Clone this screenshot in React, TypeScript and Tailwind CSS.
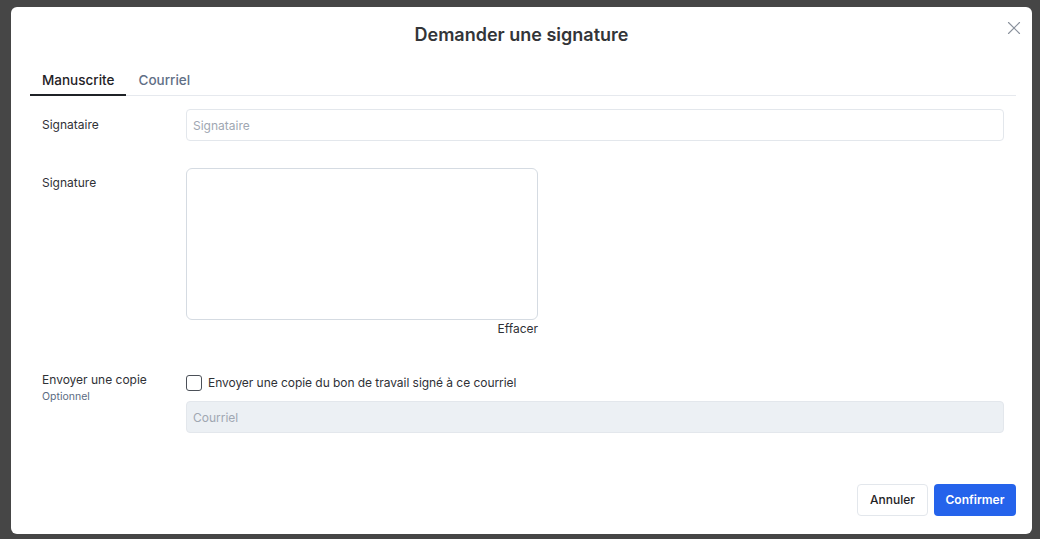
import { X } from "lucide-react";

const Label = ({ children, sub }: { children: React.ReactNode; sub?: string }) => (
    <div className="w-[144px] shrink-0">
        <div className="text-[12px] leading-[16px] text-[#2f3136]">{children}</div>
        {sub && <div className="mt-px text-[10.5px] leading-[16px] text-[#5b6b82]">{sub}</div>}
    </div>
);

export default function App() {
    return (
        <div
            className="h-[539px] w-[1040px] bg-[#464646] pt-[7px] pl-[11px]"
            style={{ fontFamily: "Inter, 'Noto Sans', sans-serif" }}
        >
            <div className="relative flex h-[527px] w-[1021px] flex-col rounded-md bg-white">
                <button className="absolute right-[7px] top-[10px] text-[#8a919c]">
                    <X size={22} strokeWidth={1.25} />
                </button>

                <h2 className="pt-[14px] text-center text-[18px] font-semibold leading-[28px] text-[#333538]">
                    Demander une signature
                </h2>

                <div className="ml-[19px] mr-[16px] mt-[19px] flex border-b border-[#e6e9ee]">
                    <div className="-mb-px border-b-2 border-[#1f2226] px-3 pt-[2px] pb-1 text-[13.5px] font-medium leading-5 text-[#1f2226]">
                        Manuscrite
                    </div>
                    <div className="-mb-px border-b-2 border-transparent px-3 pt-[2px] pb-1 text-[13.5px] font-medium leading-5 text-[#5f6f86]">
                        Courriel
                    </div>
                </div>

                <div className="ml-[31px] mr-[28px] flex flex-col">
                    <div className="mt-[13px] flex">
                        <div className="pt-[8px]">
                            <Label>Signataire</Label>
                        </div>
                        <input
                            placeholder="Signataire"
                            className="h-8 flex-1 rounded border border-[#e3e7ec] px-[6px] text-[12px] text-[#333] outline-none placeholder:text-[#a0a7b2]"
                        />
                    </div>

                    <div className="mt-[27px] flex">
                        <div className="pt-[7px]">
                            <Label>Signature</Label>
                        </div>
                        <div className="flex flex-col items-end">
                            <div className="h-[152px] w-[352px] rounded-md border border-[#d5dbe2]" />
                            <button className="mt-px text-[12px] leading-4 text-[#2f3136]">Effacer</button>
                        </div>
                    </div>

                    <div className="mt-[35px] flex">
                        <Label sub="Optionnel">Envoyer une copie</Label>
                        <div className="flex flex-1 flex-col">
                            <label className="flex h-[22px] items-center gap-[6px] text-[12px] tracking-[-0.05px] text-[#2f3136]">
                                <span className="h-4 w-4 rounded-[3px] border border-[#4b5058] bg-white" />
                                Envoyer une copie du bon de travail signé à ce courriel
                            </label>
                            <input
                                disabled
                                placeholder="Courriel"
                                className="mt-[7px] h-8 w-full rounded border border-[#e3e7ec] bg-[#ecf0f4] px-[6px] text-[12px] outline-none placeholder:text-[#a0a7b2]"
                            />
                        </div>
                    </div>
                </div>

                <div className="mt-auto mb-[18px] mr-[16px] flex justify-end gap-[6px]">
                    <button className="h-8 w-[71px] rounded border border-[#e3e7ec] bg-white text-[12px] font-medium text-[#1f2226]">
                        Annuler
                    </button>
                    <button className="h-8 w-[82px] rounded bg-[#2563eb] text-[12px] font-semibold text-white">
                        Confirmer
                    </button>
                </div>
            </div>
        </div>
    );
}
